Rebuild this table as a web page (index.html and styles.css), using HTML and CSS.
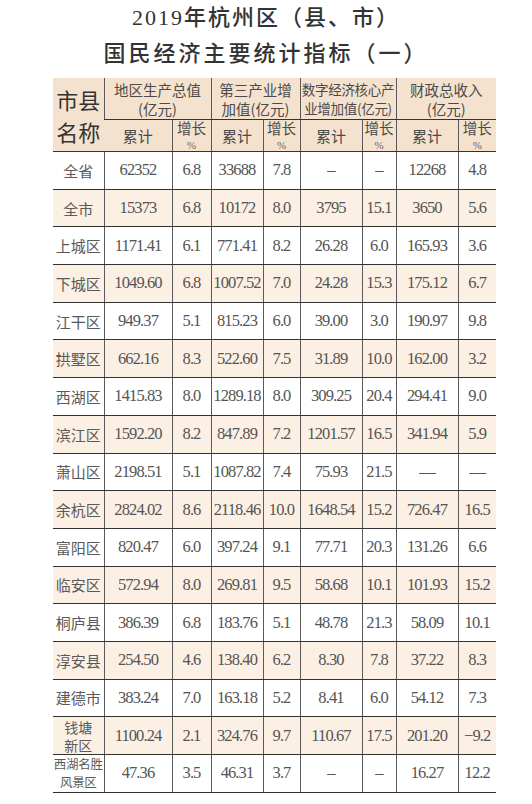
FILE: index.html
```html
<!DOCTYPE html>
<html lang="zh">
<head>
<meta charset="utf-8">
<link rel="stylesheet" href="styles.css">
</head>
<body>
<div class="title">
  <div class="t1">2019年杭州区（县、市）</div>
  <div class="t2">国民经济主要统计指标（一）</div>
</div>
<table class="tbl">
  <colgroup>
    <col class="c-name"><col class="c-gdp"><col class="c-gdpr"><col class="c-ter"><col class="c-terr"><col class="c-dig"><col class="c-digr"><col class="c-fis"><col class="c-fisr">
  </colgroup>
  <thead>
    <tr class="h1">
      <th rowspan="2" class="hname">市县<br>名称</th>
      <th colspan="2">地区生产总值<br>(亿元)</th>
      <th colspan="2">第三产业增<br>加值(亿元)</th>
      <th colspan="2" class="small">数字经济核心产<br>业增加值(亿元)</th>
      <th colspan="2">财政总收入<br>(亿元)</th>
    </tr>
    <tr class="h2">
      <th>累计</th><th class="rate">增长<br><span class="pct">%</span></th>
      <th>累计</th><th class="rate">增长<br><span class="pct">%</span></th>
      <th>累计</th><th class="rate">增长<br><span class="pct">%</span></th>
      <th>累计</th><th class="rate">增长<br><span class="pct">%</span></th>
    </tr>
  </thead>
  <tbody>
    <tr><td class="n">全省</td><td>62352</td><td>6.8</td><td>33688</td><td>7.8</td><td>–</td><td>–</td><td>12268</td><td>4.8</td></tr>
    <tr><td class="n">全市</td><td>15373</td><td>6.8</td><td>10172</td><td>8.0</td><td>3795</td><td>15.1</td><td>3650</td><td>5.6</td></tr>
    <tr><td class="n">上城区</td><td>1171.41</td><td>6.1</td><td>771.41</td><td>8.2</td><td>26.28</td><td>6.0</td><td>165.93</td><td>3.6</td></tr>
    <tr><td class="n">下城区</td><td>1049.60</td><td>6.8</td><td>1007.52</td><td>7.0</td><td>24.28</td><td>15.3</td><td>175.12</td><td>6.7</td></tr>
    <tr><td class="n">江干区</td><td>949.37</td><td>5.1</td><td>815.23</td><td>6.0</td><td>39.00</td><td>3.0</td><td>190.97</td><td>9.8</td></tr>
    <tr><td class="n">拱墅区</td><td>662.16</td><td>8.3</td><td>522.60</td><td>7.5</td><td>31.89</td><td>10.0</td><td>162.00</td><td>3.2</td></tr>
    <tr><td class="n">西湖区</td><td>1415.83</td><td>8.0</td><td>1289.18</td><td>8.0</td><td>309.25</td><td>20.4</td><td>294.41</td><td>9.0</td></tr>
    <tr><td class="n">滨江区</td><td>1592.20</td><td>8.2</td><td>847.89</td><td>7.2</td><td>1201.57</td><td>16.5</td><td>341.94</td><td>5.9</td></tr>
    <tr><td class="n">萧山区</td><td>2198.51</td><td>5.1</td><td>1087.82</td><td>7.4</td><td>75.93</td><td>21.5</td><td>—</td><td>—</td></tr>
    <tr><td class="n">余杭区</td><td>2824.02</td><td>8.6</td><td>2118.46</td><td>10.0</td><td>1648.54</td><td>15.2</td><td>726.47</td><td>16.5</td></tr>
    <tr><td class="n">富阳区</td><td>820.47</td><td>6.0</td><td>397.24</td><td>9.1</td><td>77.71</td><td>20.3</td><td>131.26</td><td>6.6</td></tr>
    <tr><td class="n">临安区</td><td>572.94</td><td>8.0</td><td>269.81</td><td>9.5</td><td>58.68</td><td>10.1</td><td>101.93</td><td>15.2</td></tr>
    <tr><td class="n">桐庐县</td><td>386.39</td><td>6.8</td><td>183.76</td><td>5.1</td><td>48.78</td><td>21.3</td><td>58.09</td><td>10.1</td></tr>
    <tr><td class="n">淳安县</td><td>254.50</td><td>4.6</td><td>138.40</td><td>6.2</td><td>8.30</td><td>7.8</td><td>37.22</td><td>8.3</td></tr>
    <tr><td class="n">建德市</td><td>383.24</td><td>7.0</td><td>163.18</td><td>5.2</td><td>8.41</td><td>6.0</td><td>54.12</td><td>7.3</td></tr>
    <tr><td class="n two">钱塘<br>新区</td><td>1100.24</td><td>2.1</td><td>324.76</td><td>9.7</td><td>110.67</td><td>17.5</td><td>201.20</td><td>−9.2</td></tr>
    <tr><td class="n two sm">西湖名胜<br>风景区</td><td>47.36</td><td>3.5</td><td>46.31</td><td>3.7</td><td>–</td><td>–</td><td>16.27</td><td>12.2</td></tr>
  </tbody>
</table>
</body>
</html>
```

FILE: styles.css
```css
html, body {
  margin: 0;
  padding: 0;
  background: #ffffff;
}
body {
  width: 532px;
  font-family: "Liberation Serif", "Noto Sans CJK SC", serif;
  color: #555;
}
.title {
  height: 78px;
  padding-top: 2px;
  box-sizing: border-box;
  text-align: center;
  font-family: "Liberation Serif", "Noto Sans CJK SC", serif;
  font-weight: 500;
  color: #333;
  font-size: 22px;
  letter-spacing: 2px;
}
.t1 {
  line-height: 32px;
}
.t2 {
  line-height: 34px;
  font-family: "Noto Sans CJK SC", sans-serif;
  letter-spacing: 3px;
}
.tbl {
  margin-left: 53px;
  width: 443px;
  table-layout: fixed;
  border-collapse: collapse;
}
.c-name { width: 51px; }
.c-gdp { width: 68px; }
.c-gdpr { width: 39px; }
.c-ter { width: 52px; }
.c-terr { width: 37px; }
.c-dig { width: 62px; }
.c-digr { width: 34px; }
.c-fis { width: 62px; }
.c-fisr { width: 38px; }

.tbl th, .tbl td {
  padding: 0;
  text-align: center;
  border-left: 1.5px solid #5a5a5a;
  border-bottom: 1.5px solid #333;
  white-space: nowrap;
  overflow: visible;
}
.tbl tr > :first-child {
  border-left: none;
}
.tbl thead th {
  background: #f4e2cf;
  font-family: "Noto Sans CJK SC", sans-serif;
  font-weight: 400;
  color: #4a4a4a;
  font-size: 14.5px;
  line-height: 19px;
}
.tbl thead .h1 th {
  height: 41px;
}
.tbl thead .h1 th.hname {
  border-left: none;
  font-size: 22px;
  line-height: 32px;
  font-weight: 400;
  color: #333;
}
.tbl thead th.small {
  font-size: 13.5px;
  letter-spacing: -0.3px;
}
.tbl thead .h2 th {
  height: 28.5px;
  font-size: 15px;
}
.tbl thead .h2 th.rate {
  font-size: 14.5px;
  line-height: 15px;
  vertical-align: middle;
}
.pct {
  font-family: "Liberation Serif", serif;
  font-size: 11px;
  line-height: 11px;
  color: #666;
}
.tbl tbody td {
  height: 36.7px;
  font-size: 16.5px;
  letter-spacing: -0.9px;
  color: #555;
  background: #ffffff;
}
.tbl tbody tr:nth-child(even) td {
  background: #fcefe3;
}
.tbl tbody td.n {
  font-family: "Noto Sans CJK SC", sans-serif;
  font-size: 15px;
  letter-spacing: 0;
  color: #5a5a5a;
}
.tbl tbody td.two {
  font-size: 14px;
  line-height: 18px;
}
.tbl tbody td.sm {
  font-size: 12.5px;
  line-height: 18px;
  letter-spacing: -0.3px;
}
```
